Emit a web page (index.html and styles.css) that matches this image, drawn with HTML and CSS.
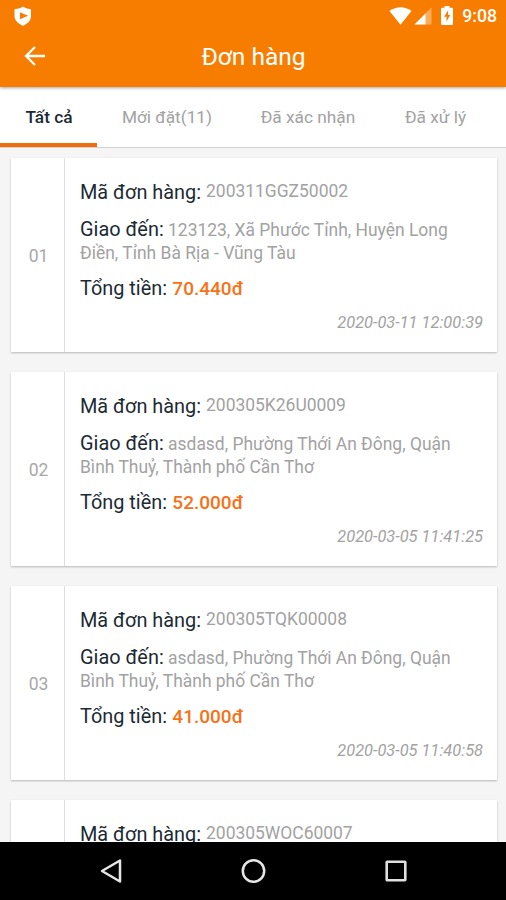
FILE: index.html
```html
<!DOCTYPE html>
<html lang="vi">
<head>
    <meta charset="UTF-8">
    <meta name="viewport" content="width=device-width, initial-scale=1.0">
    <title>Đơn hàng</title>
    <link rel="stylesheet" href="styles.css">
</head>
<body>

<div class="screen">
    <!-- Thanh trạng thái + tiêu đề -->
    <header class="header">
        <div class="status-bar">
            <svg class="icon-shield" width="18" height="20" viewBox="0 0 18 20">
                <path fill="#fff" d="M9 0.500C7 2 4 3 1.500 3Q0.500 3 0.500 4V10c0 4.500 4 8 8.500 9.700 4.500-1.700 8-5.200 8-9.700V4Q17 3 16 3C13.500 3 11 2 9 0.500z"/>
                <path fill="#f77d00" d="M6 6.300l8 3.500-8 3.500z"/>
            </svg>
            <div class="status-right">
                <svg class="icon-wifi" width="23" height="18" viewBox="0 0 23 18">
                    <path fill="#fff" d="M0.500 4Q11.500-3.500 22.500 4L11.500 17.700z"/>
                </svg>
                <svg class="icon-signal" width="18" height="18" viewBox="0 0 18 18">
                    <path fill="#fbad5c" d="M17.500 0.500v17H0.500z"/>
                    <path fill="#fff" d="M11.500 6.500v11H0.500z"/>
                </svg>
                <svg class="icon-battery" width="12" height="19" viewBox="0 0 12 19">
                    <path fill="#fff" d="M3.500 0h5v1.800H11q1 0 1 1V18q0 1-1 1H1q-1 0-1-1V2.800q0-1 1-1h2.500z"/>
                    <path fill="#f77d00" d="M7 4.500L3 10.800h2.500V15.500L9.200 9H7z"/>
                </svg>
                <span class="clock">9:08</span>
            </div>
        </div>
        <div class="title-bar">
            <svg class="icon-back" width="22" height="22" viewBox="0 0 22 22">
                <path fill="none" stroke="#fff" stroke-width="2.300" d="M21 11H2.500M11 2L2 11l9 9"/>
            </svg>
            <h1>Đơn hàng</h1>
        </div>
    </header>

    <!-- Các tab -->
    <nav class="tabs">
        <a class="tab active">Tất cả</a>
        <a class="tab tab-new">Mới đặt(11)</a>
        <a class="tab tab-confirmed">Đã xác nhận</a>
        <a class="tab tab-done">Đã xử lý</a>
    </nav>

    <!-- Danh sách đơn hàng -->
    <main class="orders">
        <div class="order">
            <div class="number">01</div>
            <div class="info">
                <p class="code"><span class="label">Mã đơn hàng:</span> <span class="value">200311GGZ50002</span></p>
                <p class="address"><span class="label">Giao đến:</span> 123123, Xã Phước Tỉnh, Huyện Long<br>Điền, Tỉnh Bà Rịa - Vũng Tàu</p>
                <p class="total"><span class="label">Tổng tiền:</span> <b class="price">70.440đ</b></p>
                <p class="date">2020-03-11 12:00:39</p>
            </div>
        </div>
        <div class="order">
            <div class="number">02</div>
            <div class="info">
                <p class="code"><span class="label">Mã đơn hàng:</span> <span class="value">200305K26U0009</span></p>
                <p class="address"><span class="label">Giao đến:</span> asdasd, Phường Thới An Đông, Quận<br>Bình Thuỷ, Thành phố Cần Thơ</p>
                <p class="total"><span class="label">Tổng tiền:</span> <b class="price">52.000đ</b></p>
                <p class="date">2020-03-05 11:41:25</p>
            </div>
        </div>
        <div class="order">
            <div class="number">03</div>
            <div class="info">
                <p class="code"><span class="label">Mã đơn hàng:</span> <span class="value">200305TQK00008</span></p>
                <p class="address"><span class="label">Giao đến:</span> asdasd, Phường Thới An Đông, Quận<br>Bình Thuỷ, Thành phố Cần Thơ</p>
                <p class="total"><span class="label">Tổng tiền:</span> <b class="price">41.000đ</b></p>
                <p class="date">2020-03-05 11:40:58</p>
            </div>
        </div>
        <div class="order">
            <div class="number"></div>
            <div class="info">
                <p class="code"><span class="label">Mã đơn hàng:</span> <span class="value">200305WOC60007</span></p>
            </div>
        </div>
    </main>

    <!-- Thanh điều hướng -->
    <footer class="nav-bar">
        <svg width="24" height="26" viewBox="0 0 24 26">
            <path fill="none" stroke="#e6e6e6" stroke-width="2.500" stroke-linejoin="round" d="M21 2.500v21L3 13z"/>
        </svg>
        <svg width="26" height="26" viewBox="0 0 26 26">
            <circle cx="12.500" cy="13" r="10.700" fill="none" stroke="#e6e6e6" stroke-width="2.500"/>
        </svg>
        <svg width="24" height="26" viewBox="0 0 24 26">
            <rect x="2.700" y="3.700" width="18.600" height="18.600" rx="0.500" fill="none" stroke="#e0e0e0" stroke-width="2.600"/>
        </svg>
    </footer>
</div>

</body>
</html>
```

FILE: styles.css
```css
* {
    box-sizing: border-box;
}
body {
    margin: 0;
    font-family: Roboto, "Liberation Sans", sans-serif;
    background-color: #f5f5f5;
    color: #a2a2a2;
}
h1, p {
    margin: 0;
}
svg {
    display: block;
}
.screen {
    height: 900px;
    display: flex;
    flex-direction: column;
    overflow: hidden;
}

/* Cabecera */
.header {
    height: 87px;
    flex: none;
    background-color: #f77d00;
    color: #fff;
    box-shadow: 0 1px 3px rgba(0, 0, 0, 0.35);
    z-index: 1;
}
.status-bar {
    height: 31px;
    display: flex;
    justify-content: space-between;
    align-items: center;
    padding: 0 9px 0 14px;
}
.status-right {
    display: flex;
    align-items: center;
}
.icon-wifi {
    margin-right: 2px;
}
.icon-battery {
    margin-left: 9px;
}
.clock {
    margin-left: 9px;
    padding-top: 1px;
    font-size: 17.6px;
    font-weight: 500;
    line-height: 30px;
}
.title-bar {
    height: 50px;
    display: grid;
    grid-template-columns: 50px 1fr 50px;
    align-items: center;
}
.icon-back {
    margin-left: 24px;
}
.title-bar h1 {
    padding-left: 1px;
    text-align: center;
    font-size: 24.5px;
    font-weight: 400;
}

/* Tabs */
.tabs {
    height: 61px;
    flex: none;
    display: grid;
    grid-template-columns: 97px 140px 142px 1fr;
    background-color: #fff;
    border-bottom: 1px solid #d2d2d2;
}
.tab {
    display: flex;
    align-items: center;
    justify-content: center;
    font-size: 17.3px;
}
.tab.active {
    padding-left: 1px;
    color: #1b2a33;
    font-weight: 500;
    box-shadow: inset 0 -4px #f06c0c;
}
.tab-done {
    padding-right: 14px;
}

/* Pedidos */
.orders {
    flex: 1;
    min-height: 0;
    overflow: hidden;
    padding: 10px 9px 0 11px;
    display: flex;
    flex-direction: column;
    gap: 20px;
}
.order {
    height: 194px;
    flex: none;
    display: flex;
    background-color: #fff;
    box-shadow: 0 1px 2px rgba(0, 0, 0, 0.25);
}
.number {
    width: 54px;
    display: flex;
    align-items: center;
    justify-content: center;
    border-right: 1px solid #dedede;
    padding: 2px 0 0 2px;
    font-size: 17.5px;
    color: #a8a8a8;
}
.info {
    flex: 1;
    padding: 21px 14px 0 15px;
    font-size: 17.45px;
}
.label {
    font-size: 19.9px;
    color: #1b2a33;
}
.code {
    height: 26px;
    display: flex;
    align-items: center;
    gap: 5px;
}
.value {
    padding-bottom: 2px;
}
.address {
    margin-top: 13px;
    line-height: 23px;
}
.total {
    margin-top: 12px;
    line-height: 24px;
}
.price {
    margin-left: 1px;
    font-size: 19px;
    font-weight: 500;
    color: #f77117;
}
.date {
    margin-top: 10px;
    text-align: right;
    font-size: 16.4px;
    font-style: italic;
    line-height: 24px;
}

/* Barra inferior */
.nav-bar {
    height: 58px;
    flex: none;
    display: flex;
    align-items: center;
    justify-content: space-between;
    padding: 0 98px 0 99px;
    background-color: #000;
}
```
